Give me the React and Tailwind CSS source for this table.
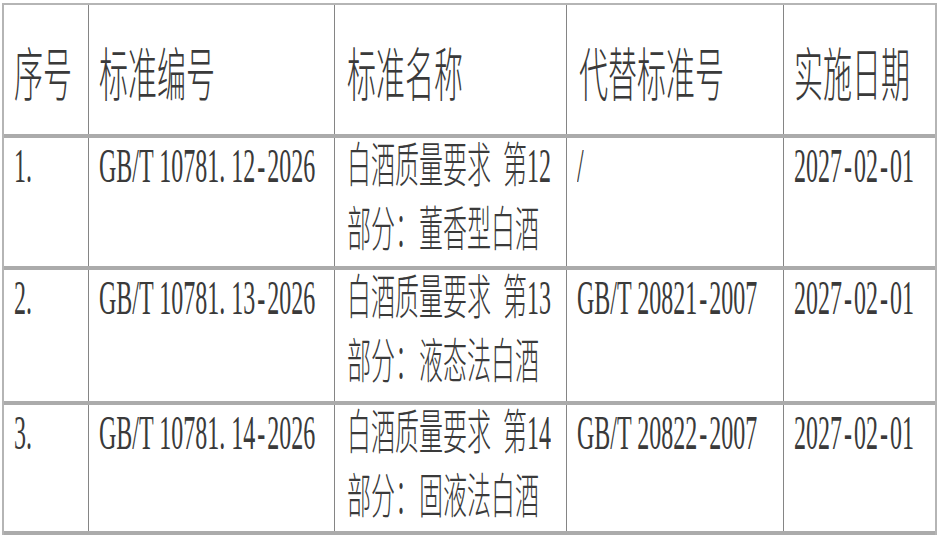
import React from "react";

function T({ t }) {
  const parts = [];
  let buf = "";
  [...t].forEach((c, i) => {
    if (c === "." || c === "-" || c === "_") {
      if (buf) {
        parts.push(buf);
        buf = "";
      }
      parts.push(
        <span
          key={i}
          className={`inline-block w-[12px] ${c === "." ? "text-left" : "text-center"}`}
        >
          {c === "_" ? "\u00a0" : c}
        </span>
      );
    } else buf += c;
  });
  if (buf) parts.push(buf);
  return <>{parts}</>;
}

const cols = [
  { w: "pl-[10px]", hw: "pl-[10px]" },
  { w: "pl-[10px]", hw: "pl-[10px]" },
  { w: "pl-[12px]", hw: "pl-[12px]" },
  { w: "pl-[10px]", hw: "pl-[12px]" },
  { w: "pl-[10px]", hw: "pl-[10px]" },
];

const headers = ["序号", "标准编号", "标准名称", "代替标准号", "实施日期"];

const rows = [
  {
    h: "h-[132px]",
    cells: [["1."], ["GB/T 10781.12-2026"], ["白酒质量要求_第12", "部分：董香型白酒"], ["/"], ["2027-02-01"]],
  },
  {
    h: "h-[135px]",
    cells: [["2."], ["GB/T 10781.13-2026"], ["白酒质量要求_第13", "部分：液态法白酒"], ["GB/T 20821-2007"], ["2027-02-01"]],
  },
  {
    h: "h-[130px]",
    cells: [["3."], ["GB/T 10781.14-2026"], ["白酒质量要求_第14", "部分：固液法白酒"], ["GB/T 20822-2007"], ["2027-02-01"]],
  },
];

const grid = "grid grid-cols-[85px_246px_232px_217px_151px] border-b-4 border-[#ababab]";

export default function App() {
  return (
    <div className="w-[940px] h-[542px] bg-white overflow-hidden pl-[2px] pt-[3px] text-[#3a3a3a]">
      <div className="w-[935px] border-x-2 border-t-2 border-[#b5b5b5]">
        <div className={`${grid} h-[133px]`}>
          {headers.map((h, i) => (
            <div
              key={i}
              className={`${cols[i].hw} pt-[25px] ${i < 4 ? "border-r border-[#858585]" : ""}`}
            >
              <div className="origin-top scale-y-[2] text-[29px] font-light leading-[40px] whitespace-nowrap font-['Noto_Sans_CJK_SC',sans-serif]">
                {h}
              </div>
            </div>
          ))}
        </div>
        {rows.map((r, ri) => (
          <div key={ri} className={`${grid} ${r.h}`}>
            {r.cells.map((lines, i) => (
              <div
                key={i}
                className={`${cols[i].w} pt-[4px] ${i < 4 ? "border-r border-[#858585]" : ""}`}
              >
                <div className="origin-top scale-y-[2] text-[24px] font-light font-['Liberation_Serif','Noto_Sans_CJK_SC',serif]">
                  {lines.map((l, li) => (
                    <div key={li} className="h-[31.5px] leading-[24px] whitespace-nowrap">
                      <T t={l} />
                    </div>
                  ))}
                </div>
              </div>
            ))}
          </div>
        ))}
      </div>
    </div>
  );
}
